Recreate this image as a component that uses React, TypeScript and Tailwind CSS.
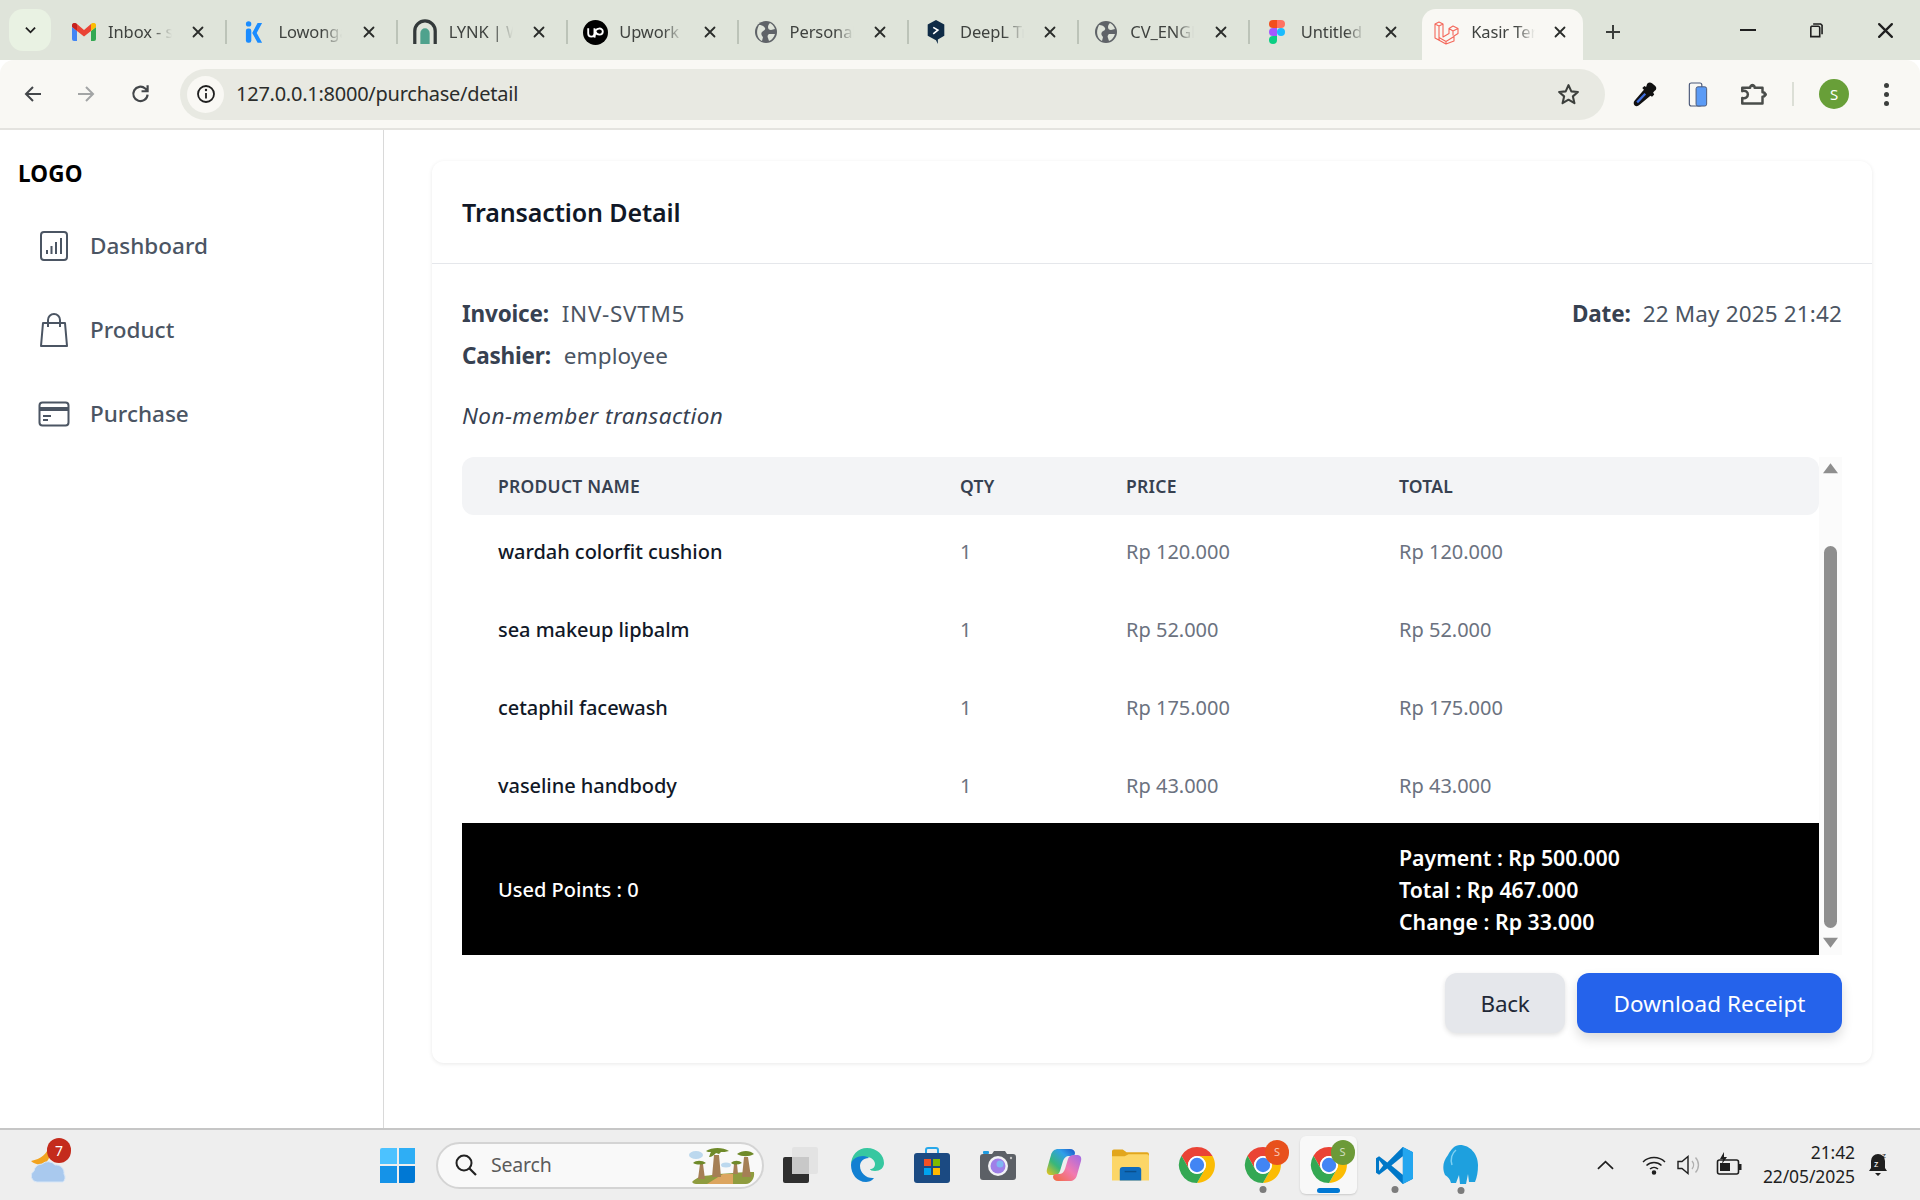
import React from "react";

const FONT = "font-['Noto_Sans','Liberation_Sans',sans-serif]";

const Globe = () => (
  <svg viewBox="0 0 24 24" className="w-[24px] h-[24px]">
    <circle cx="12" cy="12" r="11" fill="#5f6368" />
    <path d="M5 5c3 0 5 1 6 3s-2 3-3 4-1 3 1 5l-1 4C4 19 1 13 5 5zM16 3c2 1 4 3 5 6l-4 1c-2 0-3-1-3-3s1-3 2-4zM15 14h6c-1 3-3 6-6 7l-1-3c-1-2 0-3 1-4z" fill="#dfe4da" />
  </svg>
);

const Gmail = () => (
  <svg viewBox="0 0 24 18" className="w-[24px] h-[18px]">
    <path d="M0 4v12a2 2 0 0 0 2 2h3V8z" fill="#4285f4" />
    <path d="M24 4v12a2 2 0 0 1-2 2h-3V8z" fill="#34a853" />
    <path d="M19 1v7l5-4V2c0-2-3-3-5-1z" fill="#fbbc04" />
    <path d="M5 8V1l7 6 7-6v7l-7 5.500z" fill="#ea4335" />
    <path d="M0 4V2C0 0 3-1 5 1v7z" fill="#c5221f" />
  </svg>
);

const KIcon = () => (
  <svg viewBox="0 0 20 26" className="w-[18px] h-[24px]">
    <circle cx="4" cy="4" r="3" fill="#1a8cff" />
    <rect x="1" y="9" width="6" height="16" rx="2.500" fill="#1a8cff" />
    <path d="M8 14 14 3h5l-6 11 6 11h-5z" fill="#1a8cff" />
  </svg>
);

const Lynk = () => (
  <svg viewBox="0 0 26 28" className="w-[26px] h-[26px]">
    <path d="M2 27V13a11 11 0 0 1 22 0v14" fill="none" stroke="#33393a" strokeWidth="3.500" />
    <path d="M8 27V15a5 5 0 0 1 10 0v12z" fill="#4fa28d" />
  </svg>
);

const Upwork = () => (
  <svg viewBox="0 0 24 24" className="w-[25px] h-[25px]">
    <circle cx="12" cy="12" r="12" fill="#000" />
    <path d="M5 8v5a3 3 0 0 0 6 0V8M11 13c1-6 8-6 8-2s-6 4-7 0l-1 6" fill="none" stroke="#fff" strokeWidth="1.800" />
  </svg>
);

const DeepL = () => (
  <svg viewBox="0 0 20 26" className="w-[20px] h-[24px]">
    <path d="M10 0 19 5v12l-7 4v5l-2-4-9-5V5z" fill="#0f2b46" />
    <path d="M7 8l5 3-5 4" fill="none" stroke="#fff" strokeWidth="1.800" />
  </svg>
);

const Figma = () => (
  <svg viewBox="0 0 16 24" className="w-[16px] h-[24px]">
    <path d="M8 0H4a4 4 0 0 0 0 8h4z" fill="#f24e1e" />
    <path d="M8 0h4a4 4 0 0 1 0 8H8z" fill="#ff7262" />
    <path d="M8 8H4a4 4 0 0 0 0 8h4z" fill="#a259ff" />
    <circle cx="12" cy="12" r="4" fill="#1abcfe" />
    <path d="M8 16H4a4 4 0 1 0 4 4z" fill="#0acf83" />
  </svg>
);

const Laravel = () => (
  <svg viewBox="0 0 26 25" className="w-[26px] h-[25px]" fill="none" stroke="#f4675a" strokeWidth="1.100" strokeLinejoin="round">
    <path d="M1 4 5 2l4 2v13l6-3.500v-5L19 6l5 2.500v5l-4 2.500v5L12 24 1 18zM1 4l4 2 4-2M5 6v14M5 17.500 12 21.500l8-5M12 21.500V24M15 8.500l4 2.500 5-2.500M19 11v4.500" />
  </svg>
);

const Close = ({ s = 12, w = 1.800, c = "#2a2c2a" }: { s?: number; w?: number; c?: string }) => (
  <svg viewBox="0 0 12 12" style={{ width: s, height: s }}>
    <path d="M1.500 1.500l9 9M10.500 1.500l-9 9" stroke={c} strokeWidth={w} strokeLinecap="round" />
  </svg>
);

const tabs: { icon: React.ReactNode; label: string }[] = [
  { icon: <Gmail />, label: "Inbox - soniamaharani" },
  { icon: <KIcon />, label: "Lowongan Kerja" },
  { icon: <Lynk />, label: "LYNK | Website" },
  { icon: <Upwork />, label: "Upwork" },
  { icon: <Globe />, label: "Personal Website" },
  { icon: <DeepL />, label: "DeepL Translate" },
  { icon: <Globe />, label: "CV_ENGLISH" },
  { icon: <Figma />, label: "Untitled - Figma" },
];

function TabLabel({ label }: { label: string }) {
  return (
    <div className="ml-[9px] w-[64px] overflow-hidden whitespace-nowrap text-[16.500px] leading-[22px] tracking-[-0.1px] text-[#3f423f] [mask-image:linear-gradient(90deg,#000_70%,transparent_100%)]">
      {label}
    </div>
  );
}

function Tab({ icon, label, last }: { icon: React.ReactNode; label: string; last?: boolean }) {
  return (
    <div className="relative h-[51px] pb-[5px] flex items-center shrink-0 w-[170.400px] pl-[12px]">
      <div className="w-[30px] flex justify-center shrink-0">{icon}</div>
      <TabLabel label={label} />
      <div className="ml-auto mr-[23px] flex items-center">
        <Close />
      </div>
      {!last && <div className="absolute right-0 top-[11px] h-[24px] w-[2px] bg-[#bcc3b8]" />}
    </div>
  );
}

function ActiveTab() {
  return (
    <div className="ml-[2px] relative h-[51px] pb-[5px] flex items-center shrink-0 w-[161px] pl-[10px] bg-[#f9f8f4] rounded-t-[14px]">
      <div className="w-[30px] flex justify-center shrink-0">
        <Laravel />
      </div>
      <TabLabel label="Kasir Termurah" />
      <div className="ml-auto mr-[17px] flex items-center">
        <Close />
      </div>
    </div>
  );
}

function BrowserChrome() {
  return (
    <div className="shrink-0">
      <div className="h-[60px] bg-[#dfe4da] flex items-start pt-[9px] relative">
        <div className="ml-[9px] w-[42px] h-[42px] rounded-[14px] bg-[#e9f2e3] flex items-center justify-center">
          <svg viewBox="0 0 12 8" className="w-[11px] h-[8px]"><path d="M1 1.500 6 6.500 11 1.500" fill="none" stroke="#1f1f1f" strokeWidth="2" /></svg>
        </div>
        <div className="flex ml-[6px]">
          {tabs.map((t, i) => (
            <Tab key={i} icon={t.icon} label={t.label} last={i === tabs.length - 1} />
          ))}
          <ActiveTab />
        </div>
        <svg viewBox="0 0 16 16" className="ml-[22px] mt-[15px] w-[16px] h-[16px]"><path d="M8 1v14M1 8h14" stroke="#3a3d3a" strokeWidth="2" /></svg>
        <div className="ml-auto flex items-center h-[40px] mt-[1px] pr-[26px]">
          <div className="w-[16px] h-[2px] bg-[#1f1f1f]" />
          <svg viewBox="0 0 16 16" className="ml-[52px] w-[15px] h-[17px]"><path d="M4 3.500h7a1.500 1.500 0 0 1 1.500 1.500v9.500H3V5A1.500 1.500 0 0 1 4 3.500zM5.500 1h8l1.500 1.500V12" fill="none" stroke="#1f1f1f" strokeWidth="1.700" /></svg>
          <div className="ml-[54px]"><Close s={17} w={1.600} c="#1f1f1f" /></div>
        </div>
      </div>
      <div className="h-[70px] bg-[#f9f8f4] rounded-t-[14px] border-b-2 border-[#e4e3df] flex items-center relative">
        <svg viewBox="0 0 20 20" className="ml-[23px] w-[20px] h-[20px]"><path d="M18 10H3M10 3l-7 7 7 7" fill="none" stroke="#44474a" strokeWidth="2" /></svg>
        <svg viewBox="0 0 20 20" className="ml-[33px] w-[20px] h-[20px]"><path d="M2 10h15M10 3l7 7-7 7" fill="none" stroke="#a3a5a5" strokeWidth="2" /></svg>
        <svg viewBox="0 0 20 20" className="ml-[34px] w-[22px] h-[22px]"><path d="M16 10.500A6.500 6.500 0 1 1 13.800 5L16 7M16 2v5.500h-5.500" fill="none" stroke="#44474a" strokeWidth="2" /></svg>
        <div className="ml-[28px] w-[1425px] h-[51px] rounded-full bg-[#e8e9e2] flex items-center pl-[7px] pr-[24px]">
          <div className="w-[37px] h-[37px] rounded-full bg-[#f9f8f4] flex items-center justify-center">
            <svg viewBox="0 0 20 20" className="w-[20px] h-[20px]"><circle cx="10" cy="10" r="8" fill="none" stroke="#1f1f1f" strokeWidth="1.800" /><path d="M10 9v5.500" stroke="#1f1f1f" strokeWidth="1.800" /><circle cx="10" cy="6" r="1.200" fill="#1f1f1f" /></svg>
          </div>
          <span className="ml-[12px] text-[20px] text-[#2b2d2b] tracking-[-0.25px]">127.0.0.1:8000/purchase/detail</span>
          <svg viewBox="0 0 24 24" className="ml-auto w-[25px] h-[25px]"><path d="M12 3l2.700 6 6.300.600-4.800 4.200 1.500 6.500L12 17l-5.700 3.300 1.500-6.500L3 9.600 9.300 9z" fill="none" stroke="#3c3f3c" strokeWidth="2" strokeLinejoin="round" /></svg>
        </div>
        <svg viewBox="0 0 24 24" className="ml-[27px] w-[26px] h-[26px]">
          <path d="M14 2.500c1.500-1.500 3-1.500 4.500-.5l3 2.500c1.500 1.500 1 3.500-.5 4.500l-1.500 1.500 1 2-2 2-1.500-1L7 22c-1.500 1.500-3.500 1.500-4.500.5S1 19.500 2.500 18L11 8 9.500 6.500l2-2 1.500 1z" fill="#111" />
          <path d="M4 19 11.500 11l1.500 1.500L5.500 20.500z" fill="#3f6fe0" />
        </svg>
        <svg viewBox="0 0 20 26" className="ml-[30px] w-[20px] h-[25px]">
          <rect x="1" y="1" width="13" height="24" rx="2" fill="#f9f8f4" stroke="#4a5878" strokeWidth="1.200" />
          <rect x="8" y="5" width="11" height="20" rx="2" fill="#5b9bf5" stroke="#4a5878" strokeWidth="1" />
        </svg>
        <svg viewBox="0 0 24 24" className="ml-[32px] w-[27px] h-[27px]">
          <path d="M2 6h7c0-3 4-3 4 0h7v4c3 0 3 4 0 4v6H2v-5c3 1 5-1 5-3s-2-4-5-3z" fill="none" stroke="#4a4d4a" strokeWidth="2.200" strokeLinejoin="round" />
          <circle cx="11" cy="4" r="1.500" fill="#4a4d4a" /><circle cx="22.500" cy="12" r="1.500" fill="#4a4d4a" />
        </svg>
        <div className="ml-[25px] w-[2px] h-[24px] bg-[#dcdfd6]" />
        <div className="ml-[25px] w-[30px] h-[30px] rounded-full bg-[#689f38] text-white text-[15px] flex items-center justify-center">S</div>
        <div className="ml-[35px] flex flex-col gap-[4px]">
          <span className="w-[5px] h-[5px] rounded-full bg-[#3c3f3c]" />
          <span className="w-[5px] h-[5px] rounded-full bg-[#3c3f3c]" />
          <span className="w-[5px] h-[5px] rounded-full bg-[#3c3f3c]" />
        </div>
      </div>
    </div>
  );
}

const DashIcon = () => (
  <svg viewBox="0 0 30 32" className="w-[30px] h-[34px]" fill="none" stroke="#4b5563">
    <rect x="2" y="2" width="26" height="28" rx="3" strokeWidth="2" />
    <path d="M8 24v-4M12.500 24v-8M17 24V12M22 24V8" strokeWidth="2" />
  </svg>
);
const BagIcon = () => (
  <svg viewBox="0 0 32 36" className="w-[32px] h-[36px]" fill="none" stroke="#4b5563" strokeWidth="2" strokeLinejoin="round">
    <path d="M5 11h22l2 23H3z" />
    <path d="M10 15V8a6 6 0 0 1 12 0v7" />
  </svg>
);
const CardIcon = () => (
  <svg viewBox="0 0 32 26" className="w-[32px] h-[26px]" fill="none" stroke="#4b5563">
    <rect x="1.500" y="1.500" width="29" height="23" rx="3" strokeWidth="2" />
    <path d="M1.500 8h29" strokeWidth="4" />
    <path d="M5 15h8M5 19h5" strokeWidth="2" />
  </svg>
);

function NavItem({ icon, label }: { icon: React.ReactNode; label: string }) {
  return (
    <div className="h-[84px] flex items-center">
      <div className="w-[36px] ml-[36px] flex justify-center">{icon}</div>
      <span className="ml-[18px] text-[22.500px] font-medium text-[#4b5563]">{label}</span>
    </div>
  );
}

function Sidebar() {
  return (
    <aside className="w-[384px] shrink-0 border-r border-[#d9d9d9] bg-white">
      <div className="pl-[18px] pt-[27px] h-[74px] text-[22.500px] leading-[34px] font-bold text-black tracking-[0.2px]">LOGO</div>
      <NavItem icon={<DashIcon />} label="Dashboard" />
      <NavItem icon={<BagIcon />} label="Product" />
      <NavItem icon={<CardIcon />} label="Purchase" />
    </aside>
  );
}

const rows = [
  ["wardah colorfit cushion", "1", "Rp 120.000", "Rp 120.000"],
  ["sea makeup lipbalm", "1", "Rp 52.000", "Rp 52.000"],
  ["cetaphil facewash", "1", "Rp 175.000", "Rp 175.000"],
  ["vaseline handbody", "1", "Rp 43.000", "Rp 43.000"],
];

function Scrollbar() {
  return (
    <div className="w-[23px] shrink-0 bg-[#fbfbfb] flex flex-col items-center">
      <svg viewBox="0 0 14 10" className="mt-[6px] w-[15px] h-[11px]"><path d="M7 0l7 9.500H0z" fill="#8e8e8e" /></svg>
      <div className="mt-[72px] w-[13px] h-[382px] rounded-full bg-[#8e8e8e]" />
      <svg viewBox="0 0 14 10" className="mt-[9px] w-[15px] h-[11px]"><path d="M7 10 14 .500H0z" fill="#8e8e8e" /></svg>
    </div>
  );
}

function TxTable() {
  return (
    <div className="flex mt-[20px] h-[498px]">
      <div className="flex-1 min-w-0">
        <div className="h-[58px] bg-[#f3f4f6] rounded-[12px] grid grid-cols-[462px_166px_273px_1fr] items-center text-[17.500px] font-semibold text-[#374151] tracking-[0.25px]">
          <div className="pl-[36px]">PRODUCT NAME</div>
          <div className="pl-[36px]">QTY</div>
          <div className="pl-[36px]">PRICE</div>
          <div className="pl-[36px]">TOTAL</div>
        </div>
        <div>
          {rows.map((r) => (
            <div key={r[0]} className="h-[78px] pb-[5px] last:h-[74px] last:pb-[1px] grid grid-cols-[462px_166px_273px_1fr] items-center text-[20px] text-[#6b7280]">
              <div className="pl-[36px] font-medium text-[#111827] tracking-[-0.05px]">{r[0]}</div>
              <div className="pl-[36px]">{r[1]}</div>
              <div className="pl-[36px]">{r[2]}</div>
              <div className="pl-[36px]">{r[3]}</div>
            </div>
          ))}
        </div>
        <div className="h-[132px] pt-[2px] bg-black grid grid-cols-[901px_1fr] items-center text-white text-[20px] leading-[32px] font-medium">
          <div className="pl-[36px]">Used Points : 0</div>
          <div className="pl-[36px] text-[21.300px] font-semibold">
            <div>Payment : Rp 500.000</div>
            <div>Total : Rp 467.000</div>
            <div>Change : Rp 33.000</div>
          </div>
        </div>
      </div>
      <Scrollbar />
    </div>
  );
}

function Card() {
  return (
    <div className="w-[1440px] h-[902px] bg-white rounded-[12px] shadow-[0_1px_4px_rgba(0,0,0,0.09)]">
      <div className="h-[103px] pt-[2px] border-b border-[#e5e7eb] flex items-center px-[30px]">
        <h1 className="text-[25px] font-semibold text-[#111827] tracking-[-0.1px]">Transaction Detail</h1>
      </div>
      <div className="px-[30px] pt-[29px]">
        <div className="flex justify-between text-[22.500px] leading-[42px] text-[#4b5563]">
          <div>
            <span className="font-bold text-[#374151] mr-[13px] tracking-[-0.2px]">Invoice:</span>
            <span className="tracking-[0.7px]">INV-SVTM5</span>
          </div>
          <div>
            <span className="font-bold text-[#374151] mr-[12px] tracking-[-0.15px]">Date:</span>
            <span className="tracking-[0.15px]">22 May 2025 21:42</span>
          </div>
        </div>
        <div className="text-[22.500px] leading-[42px] text-[#4b5563]">
          <span className="font-bold text-[#374151] mr-[13px] tracking-[-0.2px]">Cashier:</span>
          <span className="tracking-[0.1px]">employee</span>
        </div>
        <div className="mt-[18px] text-[22.500px] leading-[42px] italic text-[#374151] tracking-[0.43px]">Non-member transaction</div>
        <TxTable />
        <div className="flex justify-end gap-[12px] mt-[18px]">
          <button className="w-[120px] h-[60px] pt-[1px] rounded-[12px] bg-[#e5e7eb] text-[22.500px] text-[#1f2937] shadow-[0_2px_5px_rgba(0,0,0,0.12)] tracking-[-0.3px]">Back</button>
          <button className="w-[265px] h-[60px] pt-[1px] rounded-[12px] bg-[#2563eb] text-[22.500px] text-white shadow-[0_6px_12px_rgba(0,0,0,0.14)] tracking-[0.08px]">Download Receipt</button>
        </div>
      </div>
    </div>
  );
}

const Chrome = ({ badge, letter }: { badge?: string; letter?: string }) => (
  <div className="relative w-[38px] h-[38px]">
    <svg viewBox="0 0 36 36" className="w-[38px] h-[38px]">
      <path d="M18 1a17 17 0 0 1 14.700 8.500H18A8.500 8.500 0 0 0 10.600 22L3.300 9.300A17 17 0 0 1 18 1z" fill="#ea4335" />
      <path d="M32.700 9.500A17 17 0 0 1 18 35l7.400-13A8.500 8.500 0 0 0 18 9.500z" fill="#fbbc04" />
      <path d="M3.300 9.300 10.600 22A8.500 8.500 0 0 0 25.400 22L18 35A17 17 0 0 1 3.300 9.300z" fill="#34a853" />
      <circle cx="18" cy="18" r="8.500" fill="#fff" />
      <circle cx="18" cy="18" r="6.800" fill="#4285f4" />
    </svg>
    {badge && (
      <div className={`absolute -top-[6px] -right-[7px] w-[24px] h-[25px] rounded-full text-white/70 text-[11px] flex items-center justify-center ${badge}`}>{letter}</div>
    )}
  </div>
);

const Dot = () => <span className="absolute left-1/2 -translate-x-1/2 bottom-[-9px] w-[7px] h-[7px] rounded-full bg-[#7c7c7c]" />;

function Taskbar() {
  return (
    <div className="h-[72px] shrink-0 bg-[#eeeeee] border-t-2 border-[#c6c6c6] flex items-center relative">
      <div className="relative ml-[30px] w-[38px] h-[42px]">
        <svg viewBox="0 0 38 42" className="w-[38px] h-[42px]">
          <path d="M19 2c-2 8-8 13-18 15 3 3 8 4 12 3 6-2 9-10 6-18z" fill="#f2a31f" />
          <path d="M7 38a6 6 0 0 1-3-11 8 8 0 0 1 8-7 9 9 0 0 1 13 1 8 8 0 0 1 9 9 6 6 0 0 1-1 8z" fill="#a9c9ee" stroke="#d7e6f7" strokeWidth="1" />
        </svg>
        <div className="absolute -top-[6px] left-[17px] w-[24px] h-[25px] rounded-full bg-[#c42b1c] text-white text-[14px] flex items-center justify-center">7</div>
      </div>

      <div className="ml-[312px] grid grid-cols-2 gap-[2px] w-[35px] h-[35px]">
        <div className="bg-[#4cc2ff] rounded-tl-[2px]" />
        <div className="bg-[#2eaef5]" />
        <div className="bg-[#1593e8]" />
        <div className="bg-[#0078d4] rounded-br-[2px]" />
      </div>

      <div className="ml-[21px] w-[328px] h-[47px] rounded-full bg-[#f9f9f9] border-2 border-[#d4d4d4] flex items-center pl-[16px] pr-[7px]">
        <svg viewBox="0 0 24 24" className="w-[24px] h-[24px]"><circle cx="10" cy="10" r="7.500" fill="none" stroke="#222" strokeWidth="2" /><path d="M15.500 15.500 22 22" stroke="#222" strokeWidth="2.200" /></svg>
        <span className="ml-[13px] text-[19.500px] text-[#5b5b5b] tracking-[-0.2px]">Search</span>
        <svg viewBox="10 10 66 42" className="ml-auto w-[66px] h-[42px]">
          <path d="M13 48c5-5 10-6 20-7l7-1 14-1c8-1 15-1 21-1 1 6-3 12-8 12H17c-2 0-3-1-4-2z" fill="#8f9c3f" />
          <path d="M28 50l16-10h10l0 10z" fill="#dca55f" />
          <ellipse cx="17" cy="21" rx="7" ry="4" fill="#bcd8ee" /><ellipse cx="47" cy="31" rx="5" ry="2.500" fill="#bcd8ee" />
          <path d="M19 45l2-15h3l2 15zM33 43l2-22h5l2 22zM54 40l1-10h3l1 10zM63 43l2-20h4l3 20z" fill="#a57f55" />
          <path d="M14 29c3-3 9-3 13 0-4 2-9 2-13 0zM27 17c6-4 17-4 23 0-3 1-6 1-8 1l-2 2-3-1c-2 2-4 4-7 4 1-2 1-4 2-5-2 0-4 0-5-1zM52 29c3-3 8-3 11 0-4 2-8 2-11 0zM58 20c5-4 13-4 17 0-5 3-12 3-17 0z" fill="#6f8a2a" />
        </svg>
      </div>

      <svg viewBox="0 0 36 36" className="ml-[18px] w-[36px] h-[36px]">
        <rect x="10" y="0" width="26" height="27" rx="2" fill="#e3e3e3" />
        <rect x="1" y="10" width="26" height="26" rx="2" fill="#2f2f2f" />
        <rect x="10" y="10" width="17" height="17" fill="#c8c8c8" />
      </svg>
      <svg viewBox="0 0 36 36" className="ml-[31px] w-[36px] h-[36px]">
        <path d="M2 18C2 8 9 1 18 1c10 0 17 7 17 15 0 5-4 8-9 8-3 0-5-1-5-2 3 0 5-2 5-5 0-3-3-7-8-7C10 10 2 13 2 18z" fill="#37c7a0" />
        <path d="M2 18c0-6 7-9 12-9 3 0 5 1 6 2-6 0-9 4-9 8 0 7 7 13 14 12-2 3-6 4-8 4C8 35 2 27 2 18z" fill="#1280d2" />
      </svg>
      <svg viewBox="0 0 36 36" className="ml-[29px] w-[36px] h-[36px]">
        <path d="M12 6V3a2 2 0 0 1 2-2h8a2 2 0 0 1 2 2v3" fill="none" stroke="#28a8ea" strokeWidth="2" />
        <rect x="0" y="6" width="36" height="30" rx="3" fill="#1b4a82" />
        <rect x="10" y="12" width="7" height="7" fill="#f25022" /><rect x="19" y="12" width="7" height="7" fill="#7fba00" />
        <rect x="10" y="21" width="7" height="7" fill="#00a4ef" /><rect x="19" y="21" width="7" height="7" fill="#ffb900" />
      </svg>
      <svg viewBox="0 0 36 30" className="ml-[30px] w-[36px] h-[30px]">
        <path d="M3 4h9l2-3h11l2 3h6a3 3 0 0 1 3 3v20a3 3 0 0 1-3 3H3a3 3 0 0 1-3-3V7a3 3 0 0 1 3-3z" fill="#5c6066" />
        <rect x="3" y="1" width="6" height="3" rx="1" fill="#1e9be0" />
        <circle cx="31" cy="8" r="1.200" fill="#c5c5c5" />
        <circle cx="18" cy="16" r="10" fill="#f2f2f5" />
        <circle cx="18" cy="16" r="7.500" fill="#9f7fe8" />
        <circle cx="20" cy="14" r="3.500" fill="#7fb6f2" />
      </svg>
      <svg viewBox="0 0 36 34" className="ml-[30px] w-[36px] h-[34px]">
        <defs>
          <linearGradient id="cp1" x1="0" y1="1" x2="1" y2="0">
            <stop offset="0" stopColor="#f0c419" /><stop offset="0.35" stopColor="#38b77a" /><stop offset="0.7" stopColor="#2f9fe8" /><stop offset="1" stopColor="#1a55c8" />
          </linearGradient>
          <linearGradient id="cp2" x1="1" y1="0" x2="0" y2="1">
            <stop offset="0" stopColor="#9f6ae8" /><stop offset="0.5" stopColor="#f27ab0" /><stop offset="1" stopColor="#f26a3a" />
          </linearGradient>
        </defs>
        <path d="M12 1h12c3 0 5 2 5 4 0 2-1 3-4 3h-2c-3 0-5 2-6 5l-3 10c-1 3-3 4-6 4H5c-3 0-5-2-4-6l4-14C6 3 9 1 12 1z" fill="url(#cp1)" />
        <path d="M24 33H12c-3 0-5-2-5-4 0-2 1-3 4-3h2c3 0 5-2 6-5l3-10c1-3 3-4 6-4h3c3 0 5 2 4 6l-4 14c-1 4-4 6-7 6z" fill="url(#cp2)" />
      </svg>
      <svg viewBox="0 0 38 32" className="ml-[30px] w-[37px] h-[32px]">
        <path d="M0 2a2 2 0 0 1 2-2h9l4 3h21a2 2 0 0 1 2 2v6H0z" fill="#e2a61c" />
        <path d="M0 7h13l4-2h19a2 2 0 0 1 2 2v25H0z" fill="#fcd667" />
        <path d="M8 32V21a3 3 0 0 1 3-3h16a3 3 0 0 1 3 3v11z" fill="#0f6cbd" />
        <rect x="13" y="22" width="12" height="1.500" fill="#0a4f8c" />
      </svg>
      <div className="ml-[29px]"><Chrome /></div>
      <div className="ml-[28px] relative">
        <Chrome badge="bg-[#e8501c]" letter="S" />
        <Dot />
      </div>
      <div className="ml-[18px] w-[57px] h-[58px] rounded-[6px] bg-[#f8f8f8] shadow-[0_1px_2px_rgba(0,0,0,0.15)] flex justify-center items-center relative">
        <Chrome badge="bg-[#6c9a38]" letter="S" />
        <span className="absolute bottom-[1px] left-[17px] w-[23px] h-[5px] rounded-full bg-[#0078d4]" />
      </div>
      <div className="ml-[19px] relative">
        <svg viewBox="0 0 36 36" className="w-[37px] h-[37px]">
          <path d="M26 0 36 5v26l-10 5-15-15-8 6-3-2V11l3-2 8 6z" fill="#0078c8" />
          <path d="M26 0 36 5v26l-10 5z" fill="#23a6ef" />
          <path d="M26 9 15 18l11 9z" fill="#eeeeee" />
          <path d="M3 13l4 5-4 5z" fill="#eeeeee" />
        </svg>
        <Dot />
      </div>
      <div className="ml-[30px] relative">
        <svg viewBox="0 0 36 40" className="w-[36px] h-[40px]">
          <path d="M17 0c10 0 18 9 18 20 0 7-1 12-3 17h-6l-1-8-2 10h-6l-1-9-3 8H8c-1-4-3-6-6-8-3-7-2-14 3-20 3-6 7-10 12-10z" fill="#1ea0de" />
          <path d="M13 5c-4 3-6 9-4 15" fill="none" stroke="#7fd0f2" strokeWidth="1.500" />
        </svg>
        <Dot />
      </div>

      <svg viewBox="0 0 18 10" className="ml-[118px] w-[17px] h-[10px]"><path d="M1 9l8-7.500L17 9" fill="none" stroke="#1f1f1f" strokeWidth="1.800" /></svg>
      <svg viewBox="0 0 24 20" className="ml-[28px] w-[24px] h-[20px]" fill="none" stroke="#1f1f1f" strokeWidth="1.500">
        <path d="M1 7a16 16 0 0 1 22 0M4.500 10.500a11 11 0 0 1 15 0M8 14a6 6 0 0 1 8 0" />
        <circle cx="12" cy="17.500" r="1.500" fill="#1f1f1f" />
      </svg>
      <svg viewBox="0 0 26 24" className="ml-[11px] w-[26px] h-[24px]" fill="none" stroke="#1f1f1f" strokeWidth="1.400">
        <path d="M1 8.500h4l6-5v17l-6-5H1z" />
        <path d="M15 8a6 6 0 0 1 0 8M18.500 4.500a11 11 0 0 1 0 15" stroke="#b0b0b0" />
      </svg>
      <svg viewBox="0 0 26 26" className="ml-[13px] w-[26px] h-[26px]">
        <rect x="1.500" y="8" width="21" height="14" rx="2" fill="none" stroke="#1f1f1f" strokeWidth="1.600" />
        <rect x="23" y="12" width="2.500" height="6" fill="#1f1f1f" />
        <rect x="4" y="11" width="10" height="8" fill="#1f1f1f" />
        <path d="M8 0 4 7h3l-1 5 5-7H8z" fill="#1f1f1f" />
      </svg>
      <div className="ml-auto mr-[31px] flex items-center -translate-y-[1px]">
        <div className="text-right text-[17.500px] leading-[24px] text-[#1f1f1f] tracking-[-0.1px]">
          <div>21:42</div>
          <div>22/05/2025</div>
        </div>
        <svg viewBox="0 0 22 26" className="ml-[12px] w-[22px] h-[26px]">
          <path d="M11 3a7 7 0 0 1 7 7v7l2 3H2l2-3v-7a7 7 0 0 1 7-7zM8 22h6l-3 3z" fill="#1f1f1f" />
          <text x="7" y="16" fontSize="9" fill="#fff" fontFamily="Liberation Sans">z</text>
          <text x="15" y="7" fontSize="8" fill="#1f1f1f" fontFamily="Liberation Sans">z</text>
        </svg>
      </div>
    </div>
  );
}

export default function App() {
  return (
    <div className={`w-[1920px] h-[1200px] overflow-hidden flex flex-col bg-white ${FONT}`}>
      <BrowserChrome />
      <div className="flex-1 flex min-h-0">
        <Sidebar />
        <main className="flex-1 pl-[48px] pt-[31px]">
          <Card />
        </main>
      </div>
      <Taskbar />
    </div>
  );
}
